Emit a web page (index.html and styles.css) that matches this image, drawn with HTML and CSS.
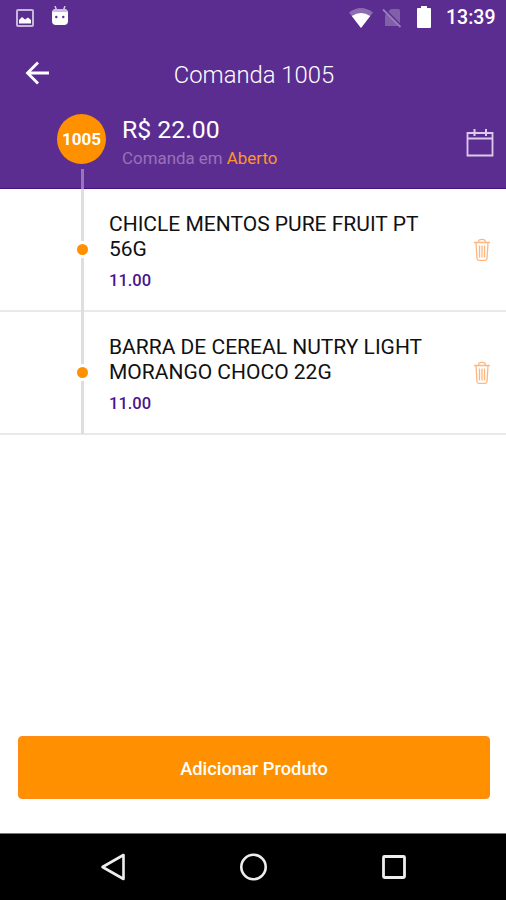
FILE: index.html
```html
<!DOCTYPE html>
<html lang="pt-BR">
<head>
  <meta charset="UTF-8">
  <meta name="viewport" content="width=device-width, initial-scale=1.0">
  <title>Comanda 1005</title>
  <link rel="stylesheet" href="styles.css">
</head>
<body>
  <header class="header">
    <div class="status-bar">
      <svg class="icon-image" width="18" height="18" viewBox="0 0 18 18">
        <rect x="1" y="1" width="16" height="16" rx="1" fill="none" stroke="#c8b6da" stroke-width="2"/>
        <path d="M3 14.500v-3.500l3-3 3 2.500 3-2 3 2.500v3.500z" fill="#fff"/>
      </svg>
      <svg class="icon-android" width="18" height="20" viewBox="0 0 18 20">
        <path d="M4 0l1.500 4M14 0l-1.500 4" stroke="#d5c6e2" stroke-width="1.500"/>
        <path d="M1 7q0-4 4-4h8q4 0 4 4v8q0 4-4 4H5q-4 0-4-4z" fill="#fff"/>
        <path d="M1.500 6q.5-3 3.500-3h8q3 0 3.500 3z" fill="#cdbbdd"/>
        <circle cx="5.300" cy="11" r="1.200" fill="#5c2d91"/>
        <circle cx="12.300" cy="11" r="1.200" fill="#5c2d91"/>
      </svg>
      <svg class="icon-wifi" width="24" height="20" viewBox="0 0 24 20">
        <path d="M0 4.500Q12-4.500 24 4.500L12 20z" fill="#8d6cb2"/>
        <path d="M2.800 8Q12 2 21.200 8L12 20z" fill="#fff"/>
      </svg>
      <svg class="icon-sim" width="20" height="20" viewBox="0 0 20 20">
        <path d="M9 1h7q2 0 2 2v15H3V7z" fill="#8260a9"/>
        <path d="M2.500 1l18 18" stroke="#5c2d91" stroke-width="1.800"/>
        <path d="M1 1.500l17.500 17.500" stroke="#9a7cba" stroke-width="1.800"/>
      </svg>
      <svg class="icon-battery" width="14" height="22" viewBox="0 0 14 22">
        <path d="M4 0h6v2h3q1 0 1 1v18q0 1-1 1H1q-1 0-1-1V3q0-1 1-1h3z" fill="#fff"/>
      </svg>
      <span class="time">13:39</span>
    </div>

    <div class="app-bar">
      <svg class="icon-back" width="24" height="24" viewBox="0 0 24 24">
        <path d="M24 12H2M13 1.500L2.500 12 13 22.500" fill="none" stroke="#fff" stroke-width="2.800"/>
      </svg>
      <h1 class="title">Comanda 1005</h1>
    </div>

    <div class="summary">
      <div class="badge">1005</div>
      <div class="summary-info">
        <p class="total">R$ 22.00</p>
        <p class="state">Comanda em <span class="open">Aberto</span></p>
      </div>
      <svg class="icon-calendar" width="28" height="28" viewBox="0 0 28 28">
        <path d="M1.500 4h25v22.500h-25zM1.500 9.500h25" fill="none" stroke="#dccbea" stroke-width="1.800"/>
        <path d="M8.500 0v7M20 0v7" stroke="#dccbea" stroke-width="2"/>
      </svg>
    </div>
  </header>

  <main class="content">
    <ul class="items">
      <li class="item">
        <span class="dot"></span>
        <div class="item-info">
          <p class="item-name">CHICLE MENTOS PURE FRUIT PT 56G</p>
          <p class="item-price">11.00</p>
        </div>
        <svg class="icon-trash" width="18" height="24" viewBox="0 0 18 24">
          <path d="M1 4.500h16M5.500 4Q5.500 1.300 9 1.300t3.500 2.700M3 5l1 15.500q.2 1.800 1.800 1.800h6.400q1.600 0 1.800-1.800l1-15.500M6.500 7.500v12M9 7.500v12M11.500 7.500v12" fill="none" stroke="#ffb780" stroke-width="1.300"/>
        </svg>
      </li>
      <li class="item">
        <span class="dot"></span>
        <div class="item-info">
          <p class="item-name">BARRA DE CEREAL NUTRY LIGHT MORANGO CHOCO 22G</p>
          <p class="item-price">11.00</p>
        </div>
        <svg class="icon-trash" width="18" height="24" viewBox="0 0 18 24">
          <path d="M1 4.500h16M5.500 4Q5.500 1.300 9 1.300t3.500 2.700M3 5l1 15.500q.2 1.800 1.800 1.800h6.400q1.600 0 1.800-1.800l1-15.500M6.500 7.500v12M9 7.500v12M11.500 7.500v12" fill="none" stroke="#ffb780" stroke-width="1.300"/>
        </svg>
      </li>
    </ul>
    <button class="add-button">Adicionar Produto</button>
  </main>

  <nav class="nav-bar">
    <svg width="28" height="28" viewBox="0 0 28 28">
      <path d="M23.500 2v24L2.500 14z" fill="none" stroke="#eee" stroke-width="2.600" stroke-linejoin="round"/>
    </svg>
    <svg width="28" height="28" viewBox="0 0 28 28">
      <circle cx="13.500" cy="14" r="12.200" fill="none" stroke="#eee" stroke-width="2.600"/>
    </svg>
    <svg width="28" height="28" viewBox="0 0 28 28">
      <rect x="3.500" y="3.500" width="21" height="21" rx="1" fill="none" stroke="#eee" stroke-width="2.800"/>
    </svg>
  </nav>
</body>
</html>
```
FILE: styles.css
```css
* {
  box-sizing: border-box;
}

body {
  display: flex;
  flex-direction: column;
  height: 100vh;
  margin: 0;
  font-family: Roboto, 'Liberation Sans', sans-serif;
  background: #fff;
  overflow: hidden;
}

h1, p, ul {
  margin: 0;
  padding: 0;
}

svg {
  display: block;
  flex-shrink: 0;
}

/* Purple header */
.header {
  height: 189px;
  background: #5c2d91;
  border-bottom: 1px solid #43107f;
  color: #fff;
}

.status-bar {
  display: flex;
  align-items: center;
  height: 35px;
  padding: 0 11px 0 16px;
}

.icon-android {
  margin: -3px 0 0 17px;
}

.icon-wifi {
  margin-left: auto;
}

.icon-sim {
  margin-left: 9px;
}

.icon-battery {
  margin: -1px 0 0 15px;
}

.time {
  width: 49px;
  margin-left: 15px;
  font-size: 19.5px;
  font-weight: 500;
  line-height: 36px;
  padding-top: 1px;
  white-space: nowrap;
}

.app-bar {
  display: grid;
  grid-template-columns: 56px 1fr 54px;
  align-items: center;
  height: 76px;
}

.icon-back {
  margin-left: 25px;
}

.title {
  padding-top: 3px;
  font-size: 23.8px;
  font-weight: 300;
  text-align: center;
}

.summary {
  display: flex;
  align-items: flex-start;
  padding: 3px 12px 0 57px;
}

.badge {
  width: 49px;
  height: 50px;
  border-radius: 50%;
  background: #ff9000;
  font-size: 17px;
  font-weight: 700;
  line-height: 51px;
  text-align: center;
}

.summary-info {
  flex: 1;
  margin-left: 16px;
}

.total {
  font-size: 24.8px;
  line-height: 32px;
}

.state {
  padding-top: 1px;
  font-size: 16.9px;
  line-height: 23px;
  color: #9872b8;
}

.open {
  color: #ff962b;
}

.icon-calendar {
  margin-top: 15px;
}

/* Product list */
.content {
  display: flex;
  flex: 1;
  flex-direction: column;
}

.items {
  position: relative;
  list-style: none;
}

/* Timeline, starts under the badge */
.items::before {
  content: '';
  position: absolute;
  top: -20px;
  left: 80.5px;
  width: 3px;
  height: 265px;
  background: linear-gradient(#9576b8 20px, #dedede 20px);
}

.item {
  display: flex;
  align-items: center;
  height: 123px;
  padding: 0 15px 0 73.5px;
  border-bottom: 2px solid #e9e9e9;
}

.dot {
  position: relative;
  flex-shrink: 0;
  width: 17px;
  height: 17px;
  border: 3px solid #fff;
  border-radius: 50%;
  background: #ff9000;
}

.item-info {
  width: 330px;
  margin-left: 18.5px;
  padding-top: 7px;
}

.item-name {
  font-size: 21px;
  line-height: 25px;
  color: #111;
}

.item-price {
  margin-top: 6px;
  font-size: 16.5px;
  font-weight: 500;
  line-height: 26px;
  color: #4a158c;
}

.icon-trash {
  margin-left: auto;
}

.add-button {
  height: 63px;
  margin: auto 16px 34px 18px;
  padding-top: 3px;
  border: 1px solid #ff8a1a;
  border-radius: 4px;
  background: #ff9000;
  color: #fff;
  font-family: inherit;
  font-size: 18.3px;
  font-weight: 500;
}

/* Android navigation */
.nav-bar {
  display: flex;
  align-items: center;
  justify-content: center;
  gap: 112px;
  height: 67px;
  padding-left: 1px;
  border-top: 1px solid #777;
  background: #000;
}
```
